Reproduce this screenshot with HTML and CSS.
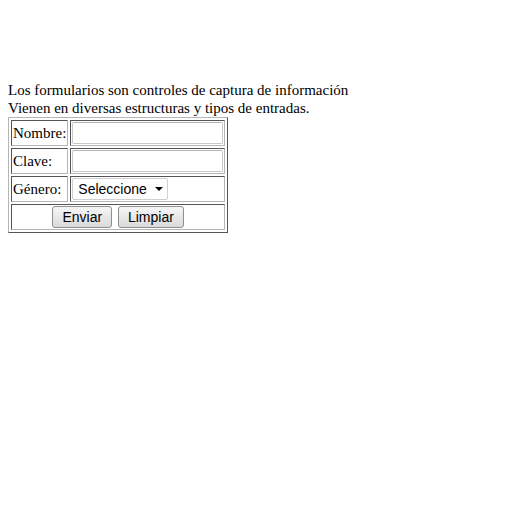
FILE: index.html
```html
<!DOCTYPE html>
<html>
<head>
<meta charset="utf-8">
<link rel="stylesheet" href="styles.css">
</head>
<body>
<div class="spacer"></div>
<div class="intro">Los formularios son controles de captura de información<br>Vienen en diversas estructuras y tipos de entradas.</div>
<form>
<table class="form-table">
<tr><td class="label">Nombre:</td><td><input class="field" type="text"></td></tr>
<tr><td class="label">Clave:</td><td><input class="field" type="password"></td></tr>
<tr><td class="label">Género:</td><td><span class="select-wrap"><select class="choice"><option>Seleccione</option></select></span></td></tr>
<tr><td colspan="2" class="actions"><button type="button" class="btn">Enviar</button> <button type="button" class="btn">Limpiar</button></td></tr>
</table>
</form>
</body>
</html>
```
FILE: styles.css
```css
body {
  margin: 8px;
  font-family: "Liberation Serif", "Times New Roman", serif;
  font-size: 15px;
  color: #000;
  background: #fff;
}
.spacer { height: 73px; }
.intro { line-height: 18px; }
form { margin: 0; }
.form-table {
  border-collapse: separate;
  border-spacing: 2px;
  border-width: 1px;
  border-style: solid;
  border-color: #b5b5b5 #555 #555 #b5b5b5;
}
.form-table td {
  padding: 1px;
  border-width: 1px;
  border-style: solid;
  border-color: #555 #b5b5b5 #b5b5b5 #555;
}
.label { padding-right: 0; }
.field {
  box-sizing: border-box;
  width: 151px;
  height: 22px;
  margin: 0;
  padding: 1px 2px;
  border: 1px solid #c8c8c8;
  border-top-color: #b3b3b3;
  border-radius: 2px;
  font: 14px "Liberation Sans", Arial, sans-serif;
  background: #fff;
  display: block;
}
.select-wrap {
  position: relative;
  display: block;
  width: 96px;
}
.select-wrap::after {
  content: "";
  position: absolute;
  right: 5px;
  top: 9px;
  border-left: 4px solid transparent;
  border-right: 4px solid transparent;
  border-top: 4px solid #000;
  pointer-events: none;
}
.choice {
  -webkit-appearance: none;
  appearance: none;
  box-sizing: border-box;
  width: 96px;
  height: 22px;
  margin: 0;
  padding: 0 0 0 5px;
  border: 1px solid #d0d0d0;
  border-radius: 2px;
  font: 14px "Liberation Sans", Arial, sans-serif;
  color: #000;
  background: #fff;
  display: block;
}
.actions { text-align: center; padding-top: 2px; }
.btn {
  box-sizing: border-box;
  height: 22px;
  margin: 0 1px;
  padding: 0 9px;
  font: 14px "Liberation Sans", Arial, sans-serif;
  color: #000;
  border: 1px solid #8f8f8f;
  border-radius: 3px;
  background: linear-gradient(#f6f6f6, #dadada);
}
```
